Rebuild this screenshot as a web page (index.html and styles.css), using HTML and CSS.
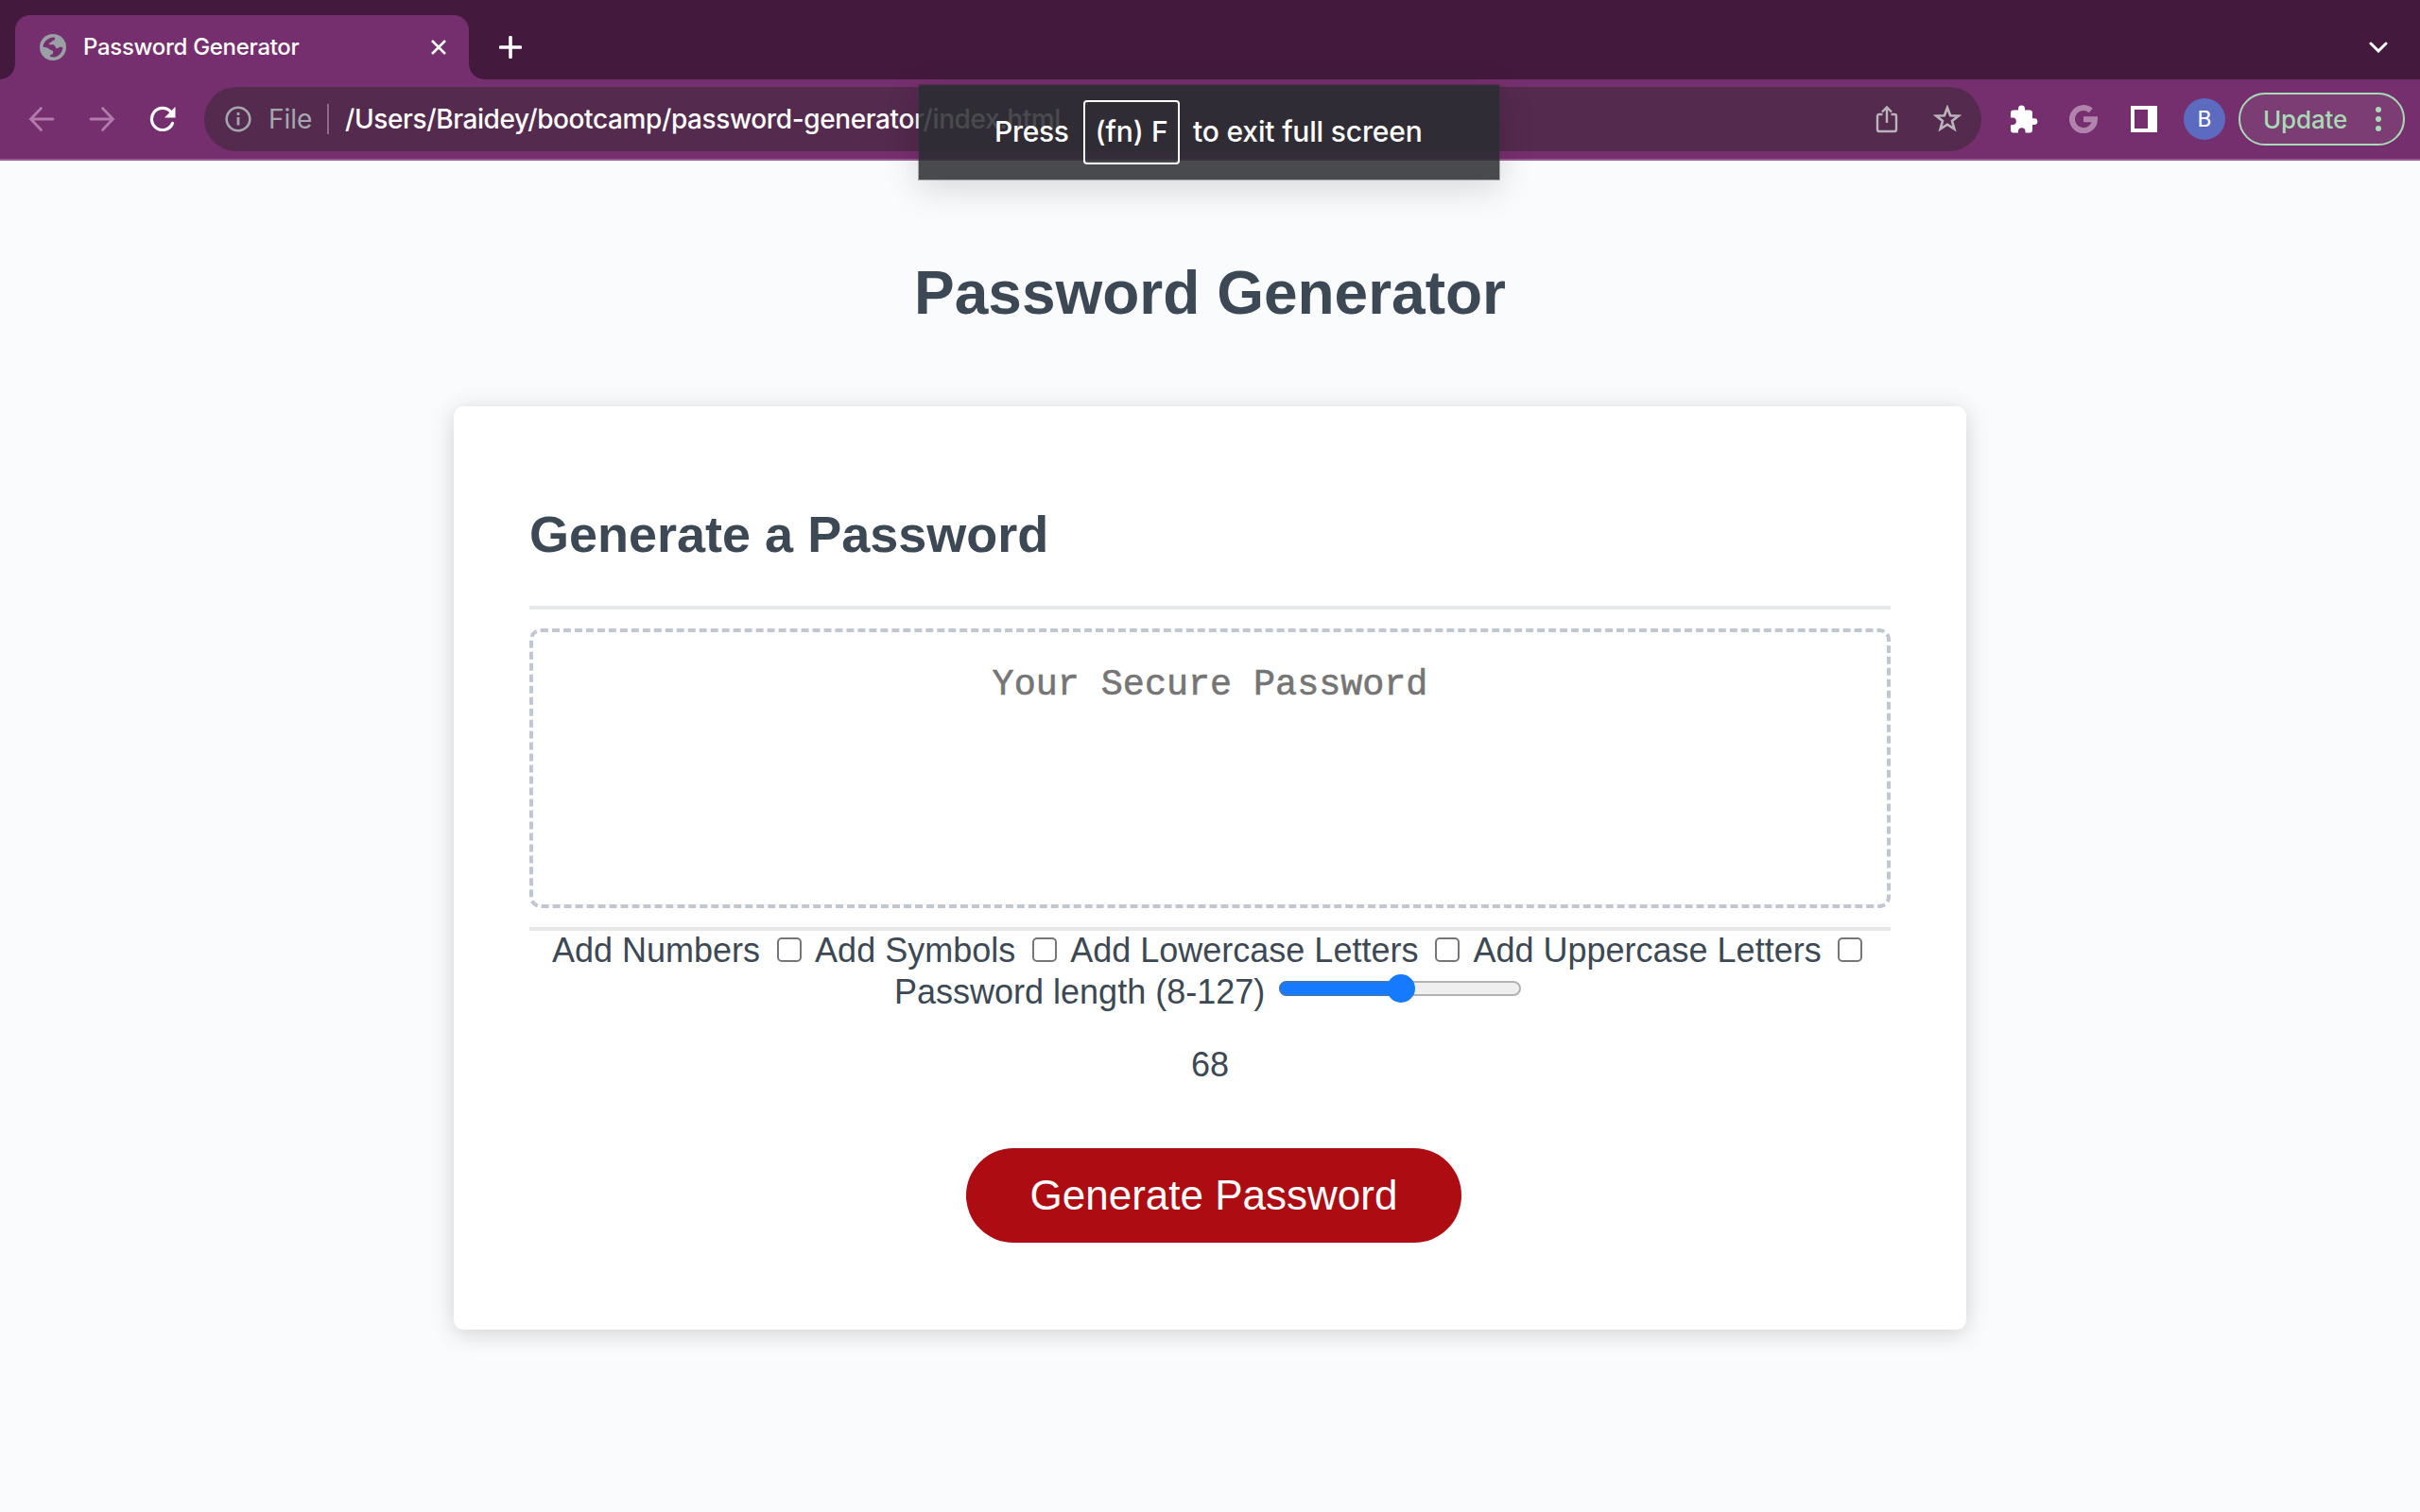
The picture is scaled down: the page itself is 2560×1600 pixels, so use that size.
FILE: index.html
```html
<!DOCTYPE html>
<html lang="en">
<head>
<meta charset="utf-8">
<title>Password Generator</title>
<link rel="stylesheet" href="styles.css">
</head>
<body>
<header class="browser">
  <div class="tabstrip">
    <div class="tab">
      <svg class="favicon" viewBox="0 0 28 28"><circle cx="14" cy="14" r="14" fill="#9aa0a6"/><path d="M3.500 13.500C4 9 7.500 5 12.500 3.800L16 3.600C16.500 5.200 16 6.500 14.500 7C12.500 7 12.800 8.500 11.500 9C9.500 9.300 10 10.500 10.500 11.200C12 11.500 13.500 11 15 11.600C17 12.500 16 15 18 15.200C19.500 15 20.500 14 22 13.500L24.500 14.500C24 19.500 20 24 15 24.500L11 24C10.500 22.500 11.500 21.500 13.500 21.500C14 20 14.500 19.500 14 18C12.500 16.500 10.500 17 9.500 15.500C8.500 14 6 14.500 3.500 13.500Z" fill="#762f6e"/></svg>
      <span class="tab-title">Password Generator</span>
      <svg class="close" viewBox="0 0 16 16"><path d="M1 1L15 15M15 1L1 15" stroke="#fff" stroke-width="2.600"/></svg>
    </div>
    <svg class="plus" viewBox="0 0 24 24"><path d="M12 1.500V22.500M1.500 12H22.500" stroke="#fff" stroke-width="3.600" stroke-linecap="round"/></svg>
    <svg class="chevron" viewBox="0 0 20 12"><path d="M2 2L10 10L18 2" fill="none" stroke="#fff" stroke-width="3" stroke-linecap="round"/></svg>
  </div>
  <div class="toolbar">
    <svg class="nav" viewBox="0 0 28 28"><path d="M26 14H3M13.500 2.500L2.500 14L13.500 25.500" fill="none" stroke="#b07aab" stroke-width="2.800" stroke-linecap="round"/></svg>
    <svg class="nav" viewBox="0 0 28 28"><path d="M2 14H25M14.500 2.500L25.500 14L14.500 25.500" fill="none" stroke="#b07aab" stroke-width="2.800" stroke-linecap="round"/></svg>
    <svg class="nav" viewBox="0 0 28 28"><path d="M24.500 18.500A11.500 11.500 0 1 1 22.500 6.300" fill="none" stroke="#fff" stroke-width="3.200" stroke-linecap="round"/><path d="M27.500 1V12.500H16Z" fill="#fff"/></svg>
    <div class="omnibox">
      <svg class="info" viewBox="0 0 28 28"><circle cx="14" cy="14" r="12.300" fill="none" stroke="#a4a7ae" stroke-width="2.600"/><path d="M14 12V20.500M14 7V10" stroke="#a4a7ae" stroke-width="2.800"/></svg>
      <span class="scheme">File</span>
      <span class="divider"></span>
      <span class="url">/Users/Braidey/bootcamp/password-generator/index.html</span>
      <svg class="share" viewBox="0 0 24 30"><path d="M7.500 10H4Q2 10 2 12V26Q2 28 4 28H20Q22 28 22 26V12Q22 10 20 10H16.500M12 19V3M7 7.500L12 2.500L17 7.500" fill="none" stroke="#bab5ba" stroke-width="2.400"/></svg>
      <svg class="star" viewBox="0 0 30 30"><path d="M15 3L18.100 11.200L26.900 11.600L20 17.100L22.400 25.600L15 20.700L7.600 25.600L10 17.100L3.100 11.600L11.900 11.200Z" fill="none" stroke="#bab5ba" stroke-width="2.600"/></svg>
    </div>
    <svg class="ext puzzle" viewBox="0 0 30 30"><path d="M26 14.200H24V8.500Q24 5.500 21 5.500H16V4A3.500 3.500 0 0 0 9 4V5.500H4Q1 5.500 1 8.500V13.500H3A3.800 3.800 0 0 1 3 21.200H1V26.500Q1 29.500 4 29.500H9V27.500A3.800 3.800 0 0 1 16.500 27.500V29.500H21Q24 29.500 24 26.500V21H26A3.400 3.400 0 0 0 26 14.200Z" fill="#fff"/></svg>
    <svg class="ext google" viewBox="0 0 30 30"><path d="M22.800 6A12 12 0 1 0 27 15.200H15" fill="none" stroke="#b184ae" stroke-width="6"/></svg>
    <svg class="ext panel" viewBox="0 0 28 28"><path fill="#fff" fill-rule="evenodd" d="M0 0H28V28H0ZM4 4V24H18V4Z"/></svg>
    <span class="avatar">B</span>
    <div class="update"><span class="update-label">Update</span><span class="dots"><i></i><i></i><i></i></span></div>
  </div>
  <div class="notice"><span class="press">Press</span><kbd class="key">(fn) F</kbd><span class="exit">to exit full screen</span></div>
</header>
<main class="page">
  <h1 class="title">Password Generator</h1>
  <section class="card">
    <h2 class="card-title">Generate a Password</h2>
    <div class="card-body"><textarea class="password" placeholder="Your Secure Password" readonly></textarea></div>
    <div class="options">
      <label class="option"><span>Add Numbers</span><input class="check" type="checkbox"></label>
      <label class="option"><span>Add Symbols</span><input class="check" type="checkbox"></label>
      <label class="option"><span>Add Lowercase Letters</span><input class="check" type="checkbox"></label>
      <label class="option"><span>Add Uppercase Letters</span><input class="check" type="checkbox"></label>
    </div>
    <div class="length"><span class="length-label">Password length (8-127)</span><div class="slider"><div class="fill"></div><div class="thumb"></div></div></div>
    <p class="value">68</p>
    <button class="generate">Generate Password</button>
  </section>
</main>
</body>
</html>
```
FILE: styles.css
```css
* { box-sizing: border-box; }
body { margin: 0; width: 2560px; height: 1600px; overflow: hidden; background: #fafbfd; color: #3c4854; font-family: "Liberation Sans", Arial, sans-serif; }
svg { display: block; flex: none; }
span, kbd { white-space: nowrap; }
.browser { position: relative; height: 170px; font-family: Inter, sans-serif; color: #fff; }
.tabstrip { height: 84px; background: #431a3d; display: flex; align-items: flex-end; padding-left: 16px; }
.tab { position: relative; width: 480px; height: 68px; background: #762f6e; border-radius: 16px 16px 0 0; display: flex; align-items: center; padding: 0 24px 0 26px; }
.tab::before, .tab::after { content: ""; position: absolute; bottom: 0; width: 16px; height: 16px; }
.tab::before { left: -16px; background: radial-gradient(circle at 0 0, transparent 15.500px, #762f6e 16px); }
.tab::after { right: -16px; background: radial-gradient(circle at 100% 0, transparent 15.500px, #762f6e 16px); }
.favicon { width: 28px; height: 28px; }
.tab-title { margin-left: 18px; font-size: 24px; line-height: 30px; font-weight: 500; letter-spacing: -.300px; }
.close { width: 16px; height: 16px; margin-left: auto; }
.plus { width: 24px; height: 24px; margin: 0 0 22px 32px; }
.chevron { width: 20px; height: 12px; margin: 0 34px 28px auto; }
.toolbar { height: 86px; background: #762f6e; border-bottom: 2px solid #995b92; display: flex; align-items: center; padding: 0 16px 0 30px; }
.nav { width: 28px; height: 28px; margin-right: 36px; }
.omnibox { width: 1880px; height: 68px; margin-left: -6px; border-radius: 34px; background: #542a4e; display: flex; align-items: center; padding: 0 20px 0 22px; }
.info { width: 28px; height: 28px; }
.scheme { width: 44px; margin-left: 18px; font-size: 28px; color: #a4a7ae; }
.divider { width: 2px; height: 32px; margin-left: 18px; background: #8c6c88; }
.url { margin-left: 17px; font-size: 28px; font-weight: 450; letter-spacing: -.390px; }
.share { width: 24px; height: 30px; margin-left: auto; }
.star { width: 30px; height: 30px; margin-left: 37px; margin-right: 1px; }
.puzzle { width: 30px; height: 30px; margin-left: 30px; }
.google { width: 30px; height: 30px; margin-left: 33px; }
.panel { width: 28px; height: 28px; margin-left: 35px; }
.avatar { width: 44px; height: 44px; margin-left: 28px; border-radius: 50%; background: #5c6bc0; font: 24px/45px Roboto, sans-serif; text-align: center; }
.update { width: 176px; height: 56px; margin-left: auto; border: 2px solid #a8dab5; border-radius: 28px; background: #7b3d74; color: #a8dab5; display: flex; align-items: center; padding: 0 23px 0 24px; }
.update-label { font-size: 26px; font-weight: 500; letter-spacing: -.150px; }
.dots { display: flex; flex-direction: column; gap: 4px; margin-left: auto; }
.dots i { width: 6px; height: 6px; border-radius: 50%; background: #a8dab5; }
.notice { position: absolute; left: 971px; top: 89px; width: 616px; height: 102px; background: rgba(42, 44, 49, .86); background-clip: padding-box; border: 1px solid rgba(50, 50, 50, .4); box-shadow: 0 8px 36px rgba(0, 0, 0, .15); display: flex; align-items: center; padding: 0 0 1px 80px; font-size: 30px; line-height: 36px; font-weight: 450; }
.press { width: 77px; letter-spacing: -.300px; margin-top: -2px; }
.key { width: 102px; height: 68px; margin-left: 17px; border: 2px solid #fff; border-radius: 4px; font: 450 30px/62px Inter, sans-serif; text-align: center; }
.exit { margin-left: 14px; margin-top: -2px; letter-spacing: -.170px; }
.page { padding: 100px 480px 0; }
.title { margin: 0; height: 160px; padding-top: 3px; font-size: 64px; line-height: 74px; text-align: center; }
.card { height: 977px; padding: 104px 80px 0; background: #fff; border-radius: 10px; box-shadow: 0 4px 24px rgba(0, 0, 0, .17); }
.card-title { margin: 0; height: 107px; font-size: 54px; line-height: 63px; }
.card-body { height: 344px; border-top: 4px solid #e6e7ea; border-bottom: 4px solid #e8e8e8; padding: 20px 0; }
.password { display: block; width: 100%; height: 296px; padding: 34px 32px 30px; border: 4px dashed #c1c7d0; border-radius: 12px; background: #fff; resize: none; outline: none; overflow: hidden; text-align: center; font: 38.400px/44px "Courier New", "Liberation Mono", monospace; }
.password::placeholder { color: #757575; -webkit-text-stroke: .600px #757575; }
.options { display: flex; height: 44px; padding-left: 24px; font-size: 36px; line-height: 42px; }
.option { display: flex; margin-right: 14px; }
.option:last-child .check { margin-left: 17px; }
.check { appearance: none; width: 26px; height: 26px; margin: 7px 0 0 18px; border: 2px solid #767676; border-radius: 5px; background: #fff; }
.length { display: flex; height: 44px; padding-left: 386px; font-size: 36px; line-height: 42px; }
.slider { position: relative; width: 256px; height: 16px; margin: 9px 0 0 15px; border: 2px solid #b2b2b2; border-radius: 8px; background: #efefef; }
.fill { width: 128px; height: 16px; margin: -2px; border: 2px solid #3b76c0; border-radius: 8px 0 0 8px; background: #157afe; }
.thumb { position: absolute; left: 112px; top: -9px; width: 30px; height: 30px; border-radius: 50%; background: #157afe; }
.value { margin: 33px 0 0; font-size: 36px; line-height: 42px; text-align: center; }
.generate { display: block; width: 524px; height: 100px; margin: 67px 0 0 462px; padding: 0; border: 0; border-radius: 50px; background: #ad0c12; color: #fff; font: 44px/100px "Liberation Sans", Arial, sans-serif; }
```
